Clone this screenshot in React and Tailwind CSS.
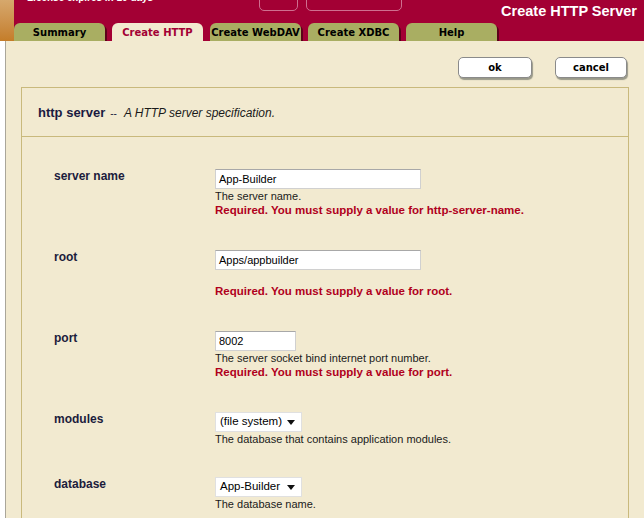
const TABS = ["Summary", "Create HTTP", "Create WebDAV", "Create XDBC", "Help"];

const FIELDS = [
  { label: "server name", kind: "text", value: "App-Builder", width: "w-[206px]", desc: "The server name.", req: "http-server-name" },
  { label: "root", kind: "text", value: "Apps/appbuilder", width: "w-[206px]", desc: "", req: "root" },
  { label: "port", kind: "text", value: "8002", width: "w-[81px]", desc: "The server socket bind internet port number.", req: "port" },
  { label: "modules", kind: "select", value: "(file system)", width: "w-[87px]", desc: "The database that contains application modules." },
  { label: "database", kind: "select", value: "App-Builder", width: "w-[87px]", desc: "The database name." },
];

function Tab({ name, active }) {
  return (
    <div
      className={`w-[91px] h-[18px] rounded-t-[6px] flex items-center justify-center text-[10px] font-bold font-['DejaVu_Sans',Verdana,sans-serif] ${
        active
          ? "bg-[#f2ead0] text-[#a30034]"
          : "bg-[#a9ae62] text-black shadow-[2px_2px_0_#5c0019]"
      }`}
    >
      {name}
    </div>
  );
}

function Field({ f }) {
  return (
    <div className="flex">
      <div className="w-[161px] shrink-0 text-[12px] leading-[14px] font-bold text-[#1c1c3c]">{f.label}</div>
      <div className="flex flex-col">
        {f.kind === "text" ? (
          <div className={`${f.width} h-[20px] bg-white border border-[#d0d0d0] border-t-[#a8a8a8] flex items-center px-[3px] text-[11px] text-black`}>
            {f.value}
          </div>
        ) : (
          <div className={`${f.width} h-[20px] bg-white border border-[#e0e0e0] flex items-center pl-[4px] pr-[6px] text-[11.5px] text-black`}>
            <span className="flex-1">{f.value}</span>
            <svg width="8" height="5" viewBox="0 0 8 5">
              <path d="M0 0h8L4 5z" fill="#111" />
            </svg>
          </div>
        )}
        <div className="h-[14px] leading-[14px] text-[11px] text-[#1a1a1a]">{f.desc}</div>
        {f.req && (
          <div className="h-[16px] leading-[14px] text-[11.5px] font-bold text-[#b0001c]">
            Required. You must supply a value for {f.req}.
          </div>
        )}
      </div>
    </div>
  );
}

function Btn({ children }) {
  return (
    <button className="h-[21px] bg-white border border-[#8a8a8a] rounded-[5px] shadow-[1px_2px_1px_#9a9a8a] text-[10px] font-bold text-black font-['DejaVu_Sans',Verdana,sans-serif]">
      {children}
    </button>
  );
}

export default function App() {
  return (
    <div className="w-[644px] h-[518px] overflow-hidden bg-white font-['Liberation_Sans',Arial,sans-serif]">
      {/* header */}
      <div className="flex h-[41px] bg-[#a30034] overflow-hidden">
        <div className="w-[14px] shrink-0 bg-gradient-to-b from-[#d6a86c] to-[#c47d28]" />
        <div className="flex-1 flex flex-col">
          <div className="h-[23px] flex items-start">
            <div className="ml-[13px] w-[232px] -mt-[8px] text-[10px] leading-[12px] font-bold text-white whitespace-nowrap">
              License expires in 10 days
            </div>
            <div className="w-[39px] h-[20px] -mt-[9px] border border-[#cf6f8f] rounded-[5px]" />
            <div className="ml-[8px] w-[96px] h-[20px] -mt-[9px] border border-[#cf6f8f] rounded-[5px]" />
            <div className="ml-auto mr-[7px] mt-[3px] text-[14.5px] leading-[16px] font-bold text-white">Create HTTP Server</div>
          </div>
          <div className="flex gap-[7px]">
            {TABS.map((t) => (
              <Tab key={t} name={t} active={t === "Create HTTP"} />
            ))}
          </div>
        </div>
      </div>

      {/* content */}
      <div className="flex h-[477px]">
        <div className="w-[5px] bg-white" />
        <div className="flex-1 bg-[#f2ead0] border-l border-[#aaa699]">
          <div className="flex justify-end gap-[23px] pt-[16px] pr-[17px]">
            <div className="w-[74px] flex flex-col"><Btn>ok</Btn></div>
            <div className="w-[72px] flex flex-col"><Btn>cancel</Btn></div>
          </div>

          <div className="mt-[9px] ml-[15px] mr-[15px] border border-[#c9b97c] h-[500px]">
            <div className="h-[49px] border-b border-[#c9b97c] flex items-center pl-[16px] pt-[2px] text-[#1a1a40]">
              <span className="text-[13px] font-bold">http server</span>
              <span className="ml-[5px] text-[10px]">--</span>
              <span className="ml-[7px] text-[12px] italic text-[#1a1a1a]">A HTTP server specification.</span>
            </div>
            <div className="pl-[32px] pt-[32px] flex flex-col gap-[31px]">
              {FIELDS.map((f) => (
                <Field key={f.label} f={f} />
              ))}
            </div>
          </div>
        </div>
      </div>
    </div>
  );
}
